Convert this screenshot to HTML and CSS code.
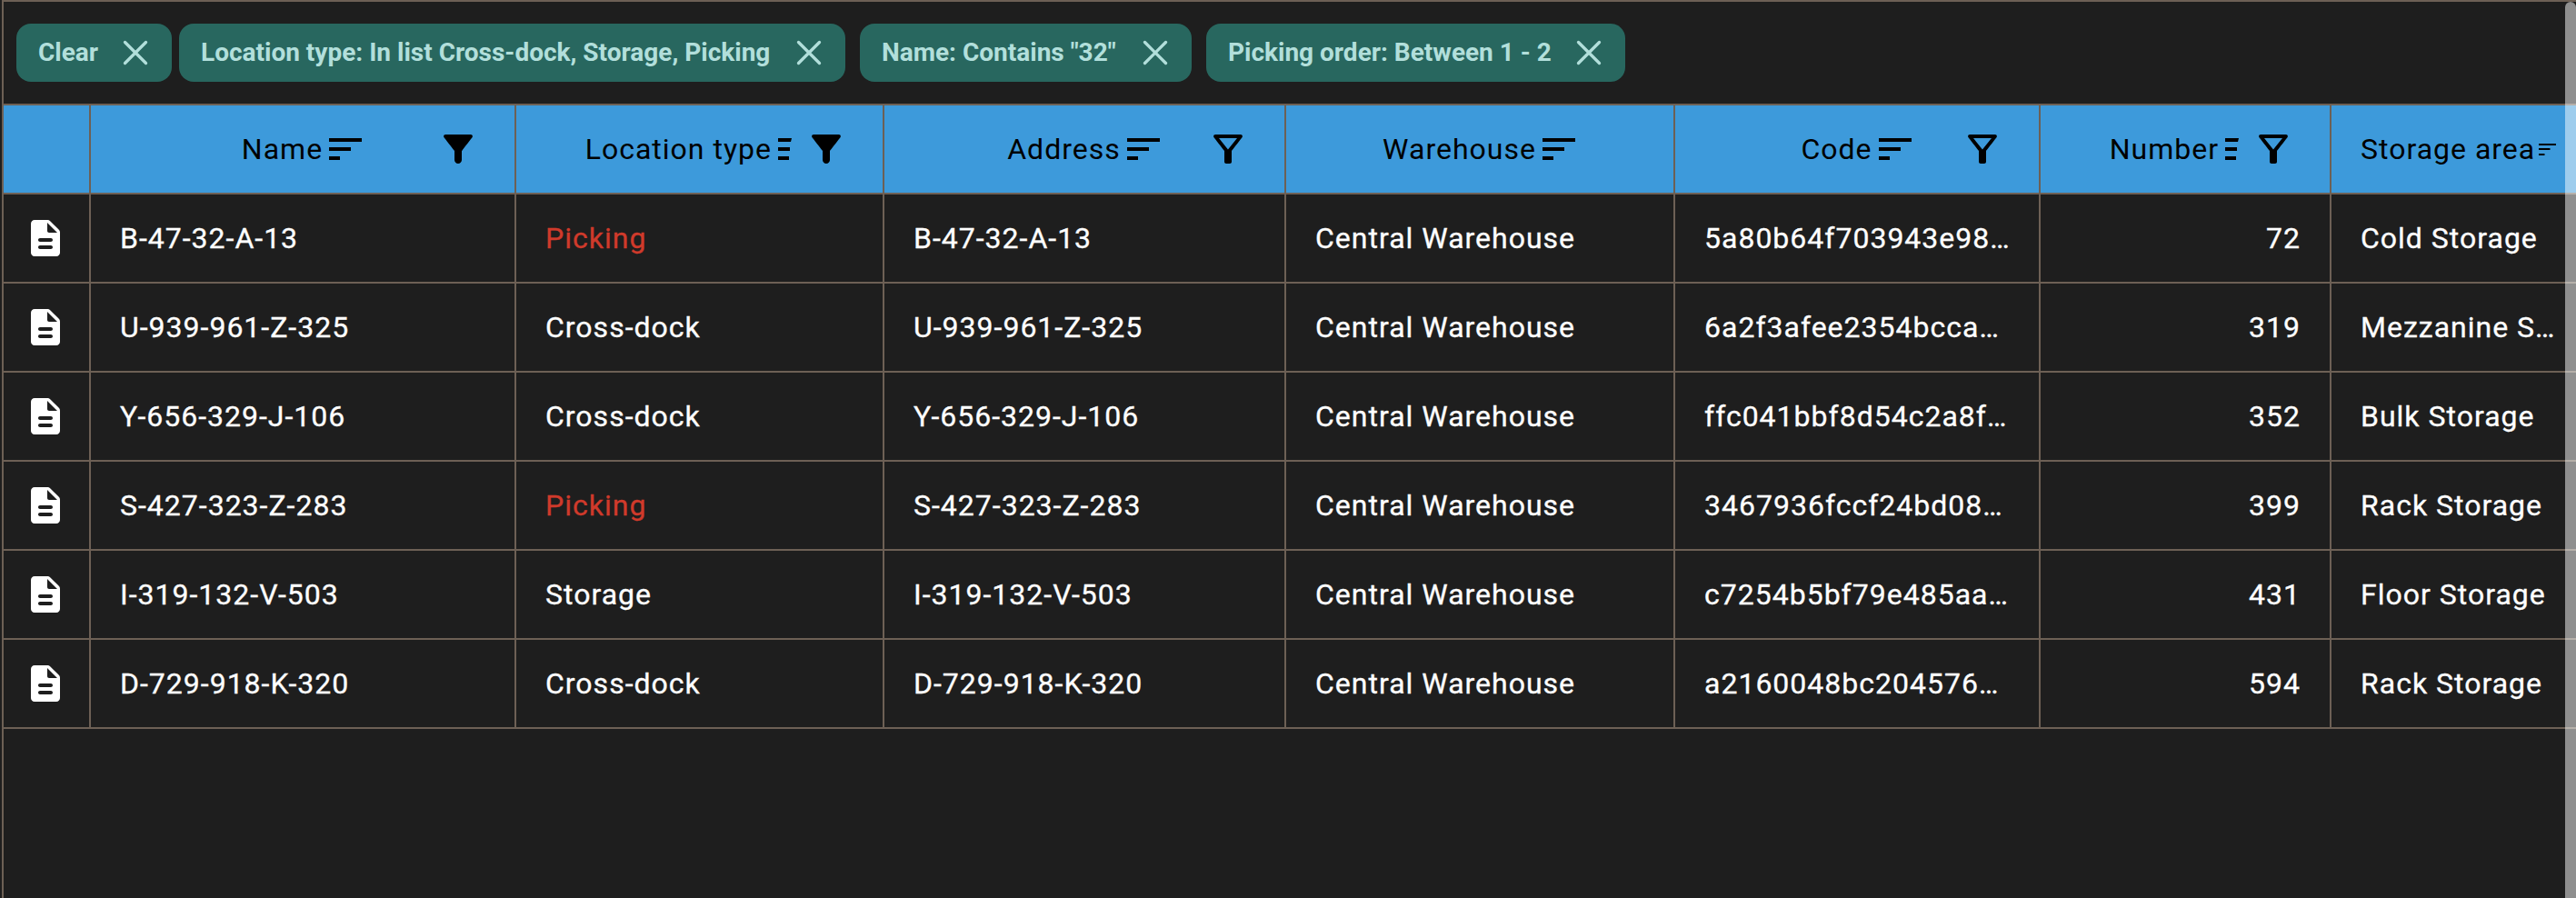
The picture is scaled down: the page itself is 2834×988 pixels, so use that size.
FILE: index.html
```html
<!DOCTYPE html>
<html lang="en">
<head>
<meta charset="utf-8">
<title>Locations</title>
<link rel="stylesheet" href="styles.css">
</head>
<body>
<svg class="defs" aria-hidden="true">
  <symbol id="close" viewBox="0 0 28 28"><path d="M2.500 2.500L25.500 25.500M25.500 2.500L2.500 25.500" fill="none" stroke="currentColor" stroke-width="3.300" stroke-linecap="round"/></symbol>
  <symbol id="sort" viewBox="0 0 36 24"><path d="M0 0H36V4H0zM0 10H24V14H0zM0 20H12V24H0z" fill="currentColor"/></symbol>
  <symbol id="sort-cut" viewBox="0 0 15 24"><path d="M0 0H15L14 4H0zM0 10H13V14H0zM0 20H12V24H0z" fill="currentColor"/></symbol>
  <symbol id="funnel" viewBox="4 4 16 16"><path d="M4.25 5.61C6.27 8.2 10 13 10 13v5c0 1.100.900 2 2 2s2-.900 2-2v-5s3.72-4.8 5.74-7.39c.51-.66.04-1.61-.79-1.61H5.04c-.83 0-1.3.95-.79 1.61z" fill="currentColor"/></symbol>
  <symbol id="funnel-open" viewBox="4 4 16 16"><path d="M7 6h10l-5.01 6.3L7 6zm-2.75-.39C6.27 8.2 10 13 10 13v6c0 .55.45 1 1 1h2c.55 0 1-.45 1-1v-6s3.72-4.8 5.74-7.39c.51-.66.04-1.61-.79-1.61H5.04c-.83 0-1.3.95-.79 1.61z" fill="currentColor"/></symbol>
  <symbol id="doc" viewBox="4 2 16 20"><path d="M19.41 7.41l-4.83-4.83c-.37-.37-.88-.58-1.41-.58H6c-1.1 0-1.99.9-1.99 2L4 20c0 1.1.89 2 1.99 2H18c1.1 0 2-.9 2-2V8.83c0-.53-.21-1.04-.59-1.42zM15 18H9c-.55 0-1-.45-1-1s.45-1 1-1h6c.55 0 1 .45 1 1s-.45 1-1 1zm0-4H9c-.55 0-1-.45-1-1s.45-1 1-1h6c.55 0 1 .45 1 1s-.45 1-1 1zm-2-6V3.5L18.5 9H14c-.55 0-1-.45-1-1z" fill="currentColor"/></symbol>
</svg>
<main class="panel">
  <div class="filters">
    <span class="chip chip-clear"><span>Clear</span><svg class="close"><use href="#close"/></svg></span>
    <span class="chip chip-type"><span>Location type: In list Cross-dock, Storage, Picking</span><svg class="close"><use href="#close"/></svg></span>
    <span class="chip chip-name"><span>Name: Contains "32"</span><svg class="close"><use href="#close"/></svg></span>
    <span class="chip chip-order"><span>Picking order: Between 1 - 2</span><svg class="close"><use href="#close"/></svg></span>
  </div>
  <div class="grid">
    <div class="row head">
      <div class="cell"></div>
      <div class="cell"><span class="label">Name<svg class="sort"><use href="#sort"/></svg></span><svg class="funnel"><use href="#funnel"/></svg></div>
      <div class="cell tight"><span class="label">Location type<svg class="sort cut"><use href="#sort-cut"/></svg></span><svg class="funnel"><use href="#funnel"/></svg></div>
      <div class="cell"><span class="label">Address<svg class="sort"><use href="#sort"/></svg></span><svg class="funnel"><use href="#funnel-open"/></svg></div>
      <div class="cell plain"><span class="label">Warehouse<svg class="sort"><use href="#sort"/></svg></span></div>
      <div class="cell"><span class="label">Code<svg class="sort"><use href="#sort"/></svg></span><svg class="funnel"><use href="#funnel-open"/></svg></div>
      <div class="cell tight"><span class="label">Number<svg class="sort cut"><use href="#sort-cut"/></svg></span><svg class="funnel"><use href="#funnel-open"/></svg></div>
      <div class="cell last"><span class="label">Storage area<svg class="sort small" viewBox="0 0 19 13"><path d="M0 0H19V2H0zM0 5H12.500V7H0zM0 11H6.500V13H0z" fill="currentColor"/></svg></span></div>
    </div>
    <div class="row"><div class="cell icon"><svg class="doc"><use href="#doc"/></svg></div><div class="cell">B-47-32-A-13</div><div class="cell picking">Picking</div><div class="cell">B-47-32-A-13</div><div class="cell">Central Warehouse</div><div class="cell">5a80b64f703943e98…</div><div class="cell num">72</div><div class="cell">Cold Storage</div></div>
    <div class="row"><div class="cell icon"><svg class="doc"><use href="#doc"/></svg></div><div class="cell">U-939-961-Z-325</div><div class="cell">Cross-dock</div><div class="cell">U-939-961-Z-325</div><div class="cell">Central Warehouse</div><div class="cell">6a2f3afee2354bcca…</div><div class="cell num">319</div><div class="cell">Mezzanine S…</div></div>
    <div class="row"><div class="cell icon"><svg class="doc"><use href="#doc"/></svg></div><div class="cell">Y-656-329-J-106</div><div class="cell">Cross-dock</div><div class="cell">Y-656-329-J-106</div><div class="cell">Central Warehouse</div><div class="cell">ffc041bbf8d54c2a8f…</div><div class="cell num">352</div><div class="cell">Bulk Storage</div></div>
    <div class="row"><div class="cell icon"><svg class="doc"><use href="#doc"/></svg></div><div class="cell">S-427-323-Z-283</div><div class="cell picking">Picking</div><div class="cell">S-427-323-Z-283</div><div class="cell">Central Warehouse</div><div class="cell">3467936fccf24bd08…</div><div class="cell num">399</div><div class="cell">Rack Storage</div></div>
    <div class="row"><div class="cell icon"><svg class="doc"><use href="#doc"/></svg></div><div class="cell">I-319-132-V-503</div><div class="cell">Storage</div><div class="cell">I-319-132-V-503</div><div class="cell">Central Warehouse</div><div class="cell">c7254b5bf79e485aa…</div><div class="cell num">431</div><div class="cell">Floor Storage</div></div>
    <div class="row"><div class="cell icon"><svg class="doc"><use href="#doc"/></svg></div><div class="cell">D-729-918-K-320</div><div class="cell">Cross-dock</div><div class="cell">D-729-918-K-320</div><div class="cell">Central Warehouse</div><div class="cell">a2160048bc204576…</div><div class="cell num">594</div><div class="cell">Rack Storage</div></div>
  </div>
</main>
<div class="scrollbar"></div>
</body>
</html>
```

FILE: styles.css
```css
* { box-sizing: border-box; }
body { margin: 0; height: 988px; padding-left: 2px; overflow: hidden; background: #1e1e1e; color: #fff; font-family: Roboto, sans-serif; font-size: 32px; line-height: 36px; letter-spacing: 1px; }
.defs { position: absolute; width: 0; height: 0; }
svg { display: block; flex: none; }
.panel { height: 988px; border-left: 2px solid #6d6055; border-top: 2px solid #6d6055; }
.filters { display: flex; height: 114px; padding: 24px 0 0 14px; border-bottom: 2px solid #6d6055; }
.chip { display: flex; align-items: center; justify-content: space-between; height: 64px; padding: 0 26px 0 24px; border-radius: 16px; background: #28675f; color: #b2dfdb; font-size: 28px; font-weight: 700; letter-spacing: 0; white-space: nowrap; }
.chip-clear { width: 171px; margin-right: 8px; }
.chip-type { width: 733px; margin-right: 16px; }
.chip-name { width: 365px; margin-right: 16px; }
.chip-order { width: 461px; }
.close { width: 28px; height: 28px; }
.row { display: grid; grid-template-columns: 96px 468px 405px 442px 428px 402px 320px 269px; height: 98px; border-bottom: 2px solid #6d6055; }
.cell { display: flex; align-items: center; min-width: 0; padding: 0 32px; border-right: 2px solid #6d6055; white-space: nowrap; overflow: hidden; -webkit-text-stroke: .3px currentColor; }
.cell:last-child { border-right: 0; }
.icon { padding: 0 0 0 30px; }
.doc { width: 32px; height: 40px; }
.num { justify-content: flex-end; }
.picking { color: #d03a2b; }
.head { background: #3d9adb; color: #000; }
.head .cell { padding-right: 46px; -webkit-text-stroke: 0; }
.head .plain { padding-right: 78px; }
.head .last { padding-right: 0; }
.label { display: flex; align-items: center; flex: 1; justify-content: center; gap: 7px; padding-left: 44px; }
.tight .label { justify-content: flex-end; padding: 0 22px 0 0; }
.last .label { justify-content: flex-start; gap: 4px; padding: 0; }
.sort { width: 36px; height: 24px; }
.cut { width: 15px; }
.small { width: 19px; height: 13px; }
.funnel { width: 32px; height: 32px; }
.scrollbar { position: absolute; right: 0; top: 2px; width: 12px; height: 986px; border-radius: 6px 6px 0 0; background: rgba(255, 255, 255, .5); }
```
